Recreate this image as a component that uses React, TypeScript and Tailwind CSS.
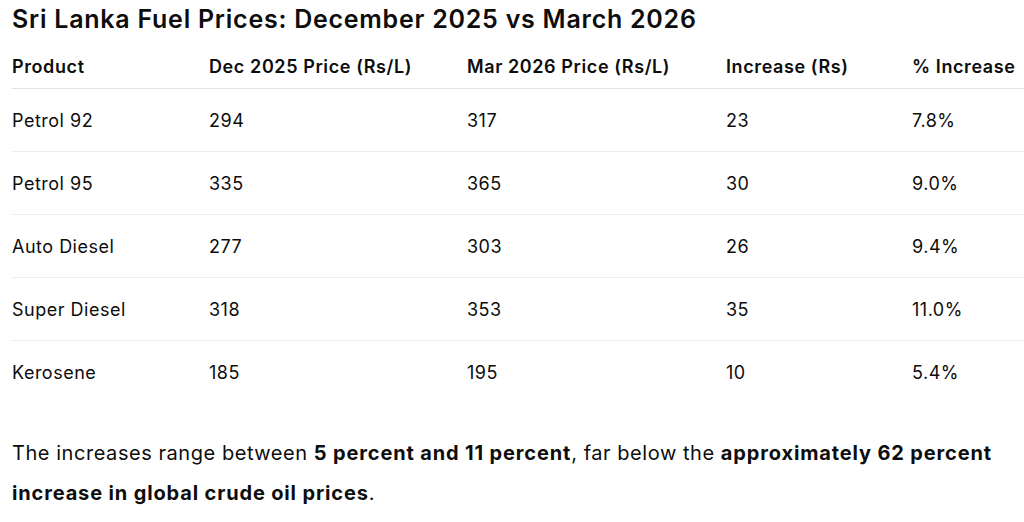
import React from 'react'

const rows = [
    ['Petrol 92', '294', '317', '23', '7.8%'],
    ['Petrol 95', '335', '365', '30', '9.0%'],
    ['Auto Diesel', '277', '303', '26', '9.4%'],
    ['Super Diesel', '318', '353', '35', '11.0%'],
    ['Kerosene', '185', '195', '10', '5.4%'],
]

const headers = ['Product', 'Dec 2025 Price (Rs/L)', 'Mar 2026 Price (Rs/L)', 'Increase (Rs)', '% Increase']

const widths = ['w-[197px]', 'w-[258px]', 'w-[259px]', 'w-[186px]', 'w-[112px]']

const App = () => {
    return (
        <div className="w-[1024px] h-[522px] overflow-hidden bg-white text-[#0d0d0d] pl-3 font-['Inter','Noto_Sans',sans-serif]">
            <h2 className="pt-[4px] text-[25px] leading-[30px] font-semibold tracking-[0.75px]">
                Sri Lanka Fuel Prices: December 2025 vs March 2026
            </h2>
            <table className="mt-[11px] w-[1012px] table-fixed border-collapse text-[18px]">
                <thead>
                    <tr className="border-b border-[#e3e3e3]">
                        {headers.map((h, i) => (
                            <th key={h} className={`${widths[i]} text-left font-semibold tracking-[0.6px] pt-[10px] pb-[9px] leading-[24px]`}>
                                {h}
                            </th>
                        ))}
                    </tr>
                </thead>
                <tbody>
                    {rows.map((r, ri) => (
                        <tr key={r[0]} className={ri < rows.length - 1 ? 'border-b border-[#ececec]' : ''}>
                            {r.map((c, ci) => (
                                <td key={ci} className="pt-[20px] pb-[18px] leading-[24px] tracking-[0.5px]">
                                    {c}
                                </td>
                            ))}
                        </tr>
                    ))}
                </tbody>
            </table>
            <p className="mt-[30px] text-[20px] leading-[40px] tracking-[0.55px]">
                The increases range between <strong className="font-bold tracking-[0.85px]">5 percent and 11 percent</strong>, far below the{' '}
                <strong className="font-bold tracking-[0.85px]">approximately 62 percent increase in global crude oil prices</strong>.
            </p>
        </div>
    )
}

export default App
